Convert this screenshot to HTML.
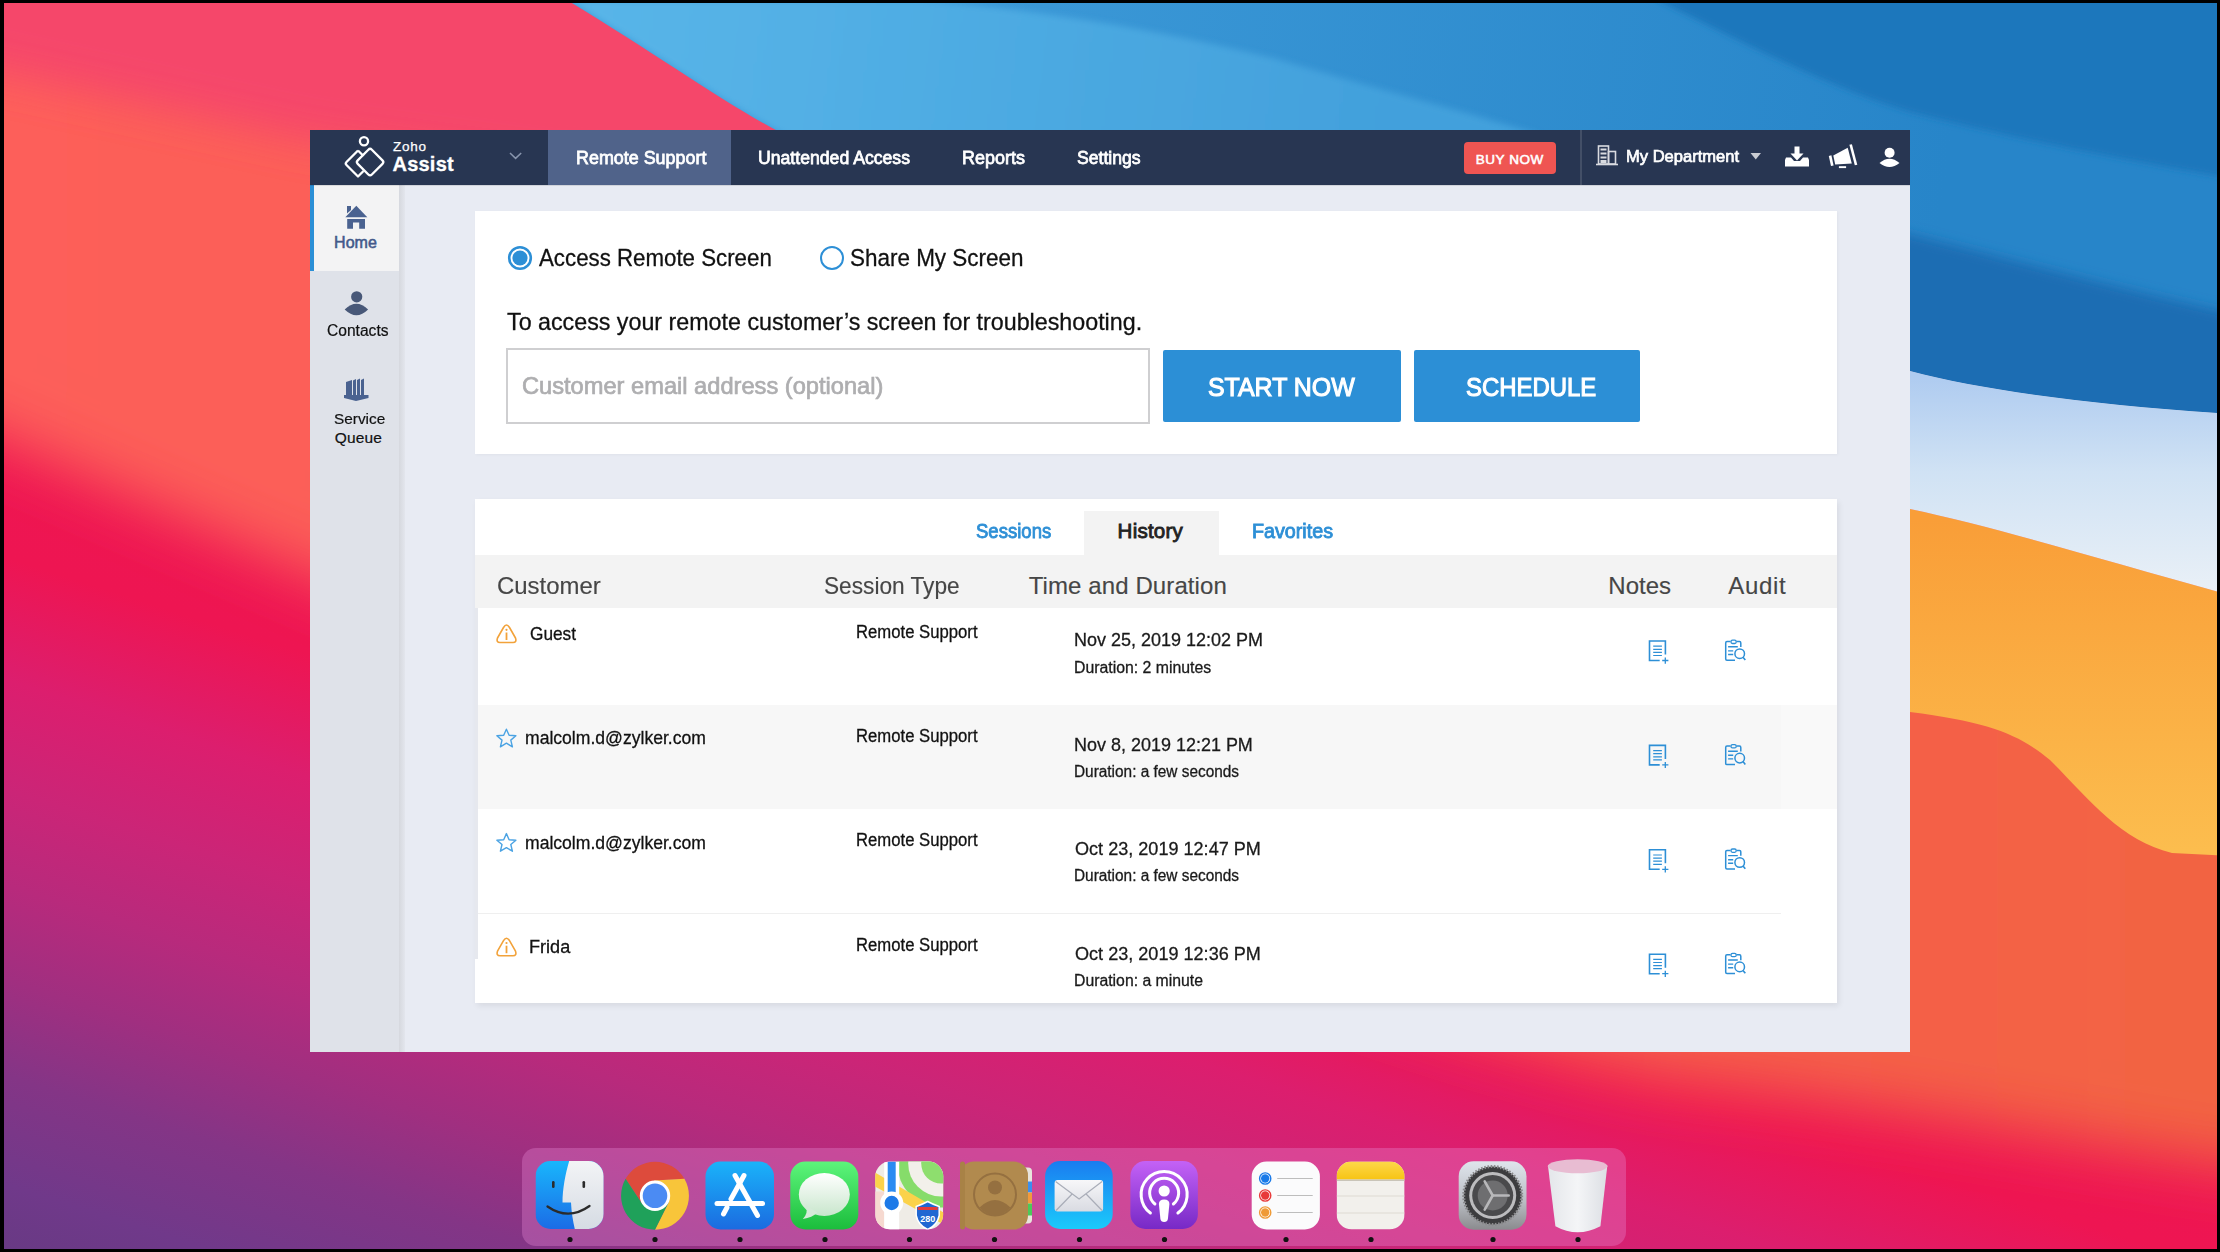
<!DOCTYPE html>
<html><head><meta charset="utf-8">
<style>
*{margin:0;padding:0;box-sizing:border-box}
html,body{width:2220px;height:1252px;overflow:hidden;background:#000;font-family:"Liberation Sans",sans-serif}
#wall{position:absolute;left:4px;top:3px;width:2213px;height:1246px;overflow:hidden}
#wall svg{position:absolute;left:-4px;top:-3px}
.a{position:absolute;white-space:nowrap;line-height:normal}
.b{position:absolute}
#win{position:absolute;left:310px;top:130px;width:1600px;height:922px;background:#e8ebf3;overflow:hidden}
#nav{position:absolute;left:0;top:0;width:1600px;height:55px;background:#283652}
#dock{position:absolute;left:522px;top:1148px;width:1104px;height:98px;border-radius:14px;background:rgba(235,140,215,0.33)}
svg.ic{position:absolute;left:0;top:0;overflow:visible}
</style></head>
<body>
<div id="wall">
<svg width="2220" height="1252" viewBox="0 0 2220 1252">
<defs>
<linearGradient id="gBlue" gradientUnits="userSpaceOnUse" x1="900" y1="0" x2="1950" y2="150">
<stop offset="0" stop-color="#3d9ad8"/>
<stop offset="1" stop-color="#2785c9"/>
</linearGradient>
<linearGradient id="gBlueA" gradientUnits="userSpaceOnUse" x1="600" y1="0" x2="1400" y2="100">
<stop offset="0" stop-color="#58b5e8"/>
<stop offset="1" stop-color="#42a0dc"/>
</linearGradient>
<clipPath id="clipBlue"><path d="M567 0 C650 50 720 100 776 130 L1000 250 L1300 360 C1600 370 1800 360 1910 371 C1990 392 2100 405 2230 414 L2230 0 Z"/></clipPath>
<filter id="blur3" x="-5%" y="-5%" width="110%" height="110%"><feGaussianBlur stdDeviation="3"/></filter>
<filter id="blur6" x="-10%" y="-10%" width="120%" height="120%"><feGaussianBlur stdDeviation="6"/></filter>
<linearGradient id="gLight" gradientUnits="userSpaceOnUse" x1="0" y1="375" x2="0" y2="590">
<stop offset="0" stop-color="#aecbf0"/>
<stop offset="0.45" stop-color="#d0e2f4"/>
<stop offset="1" stop-color="#e9f0f7"/>
</linearGradient>
<linearGradient id="gOrange" gradientUnits="userSpaceOnUse" x1="0" y1="520" x2="0" y2="850">
<stop offset="0" stop-color="#f99e38"/>
<stop offset="1" stop-color="#fcbd4e"/>
</linearGradient>
<linearGradient id="gLow" gradientUnits="userSpaceOnUse" x1="783" y1="179" x2="386" y2="1416">
<stop offset="0" stop-color="#f01a50"/>
<stop offset="0.46" stop-color="#ee1552"/>
<stop offset="0.55" stop-color="#dc1e6e"/>
<stop offset="0.63" stop-color="#cb2577"/>
<stop offset="0.7" stop-color="#b82a7c"/>
<stop offset="0.77" stop-color="#a02f80"/>
<stop offset="0.84" stop-color="#843586"/>
<stop offset="0.92" stop-color="#70398a"/>
<stop offset="1" stop-color="#633a80"/>
</linearGradient>
<linearGradient id="gUp" gradientUnits="userSpaceOnUse" x1="0" y1="0" x2="2220" y2="0">
<stop offset="0" stop-color="#fd5f5a"/>
<stop offset="0.6" stop-color="#f85a50"/>
<stop offset="1" stop-color="#f26442"/>
</linearGradient>
<filter id="blur20" x="-20%" y="-20%" width="140%" height="140%"><feGaussianBlur stdDeviation="20"/></filter>
<filter id="blur30" x="-20%" y="-20%" width="140%" height="140%"><feGaussianBlur stdDeviation="30"/></filter>
</defs>
<rect width="2220" height="1252" fill="url(#gLow)"/>
<path d="M-100 -100 H2300 V1175 C2100 1150 1950 1115 1700 1085 C1450 1060 700 750 -100 395 Z" fill="url(#gUp)" filter="url(#blur30)"/>
<path d="M-100 -100 L900 -100 L900 220 L310 140 L-100 50 Z" fill="#f5476a" filter="url(#blur20)"/>
<path d="M1300 540 C1600 560 1800 500 1910 509 C2000 528 2120 565 2230 595 L2230 856 L2172 853 C2120 840 2090 800 2050 760 C2020 735 1990 722 1910 712 C1800 700 1600 720 1300 760 Z" fill="url(#gOrange)"/>
<path d="M1300 360 C1600 370 1800 360 1910 371 C1990 392 2100 405 2230 414 L2230 595 C2120 565 2000 528 1910 509 C1800 500 1600 560 1300 540 Z" fill="url(#gLight)"/>
<path d="M567 0 C650 50 720 100 776 130 L1000 250 L1300 360 C1600 370 1800 360 1910 371 C1990 392 2100 405 2230 414 L2230 0 Z" fill="url(#gBlue)"/>
<g clip-path="url(#clipBlue)">
<path d="M567 0 L919 0 C1040 10 1160 30 1280 60 C1380 90 1460 110 1540 135 L1000 250 L776 130 C720 100 650 50 567 0 Z" fill="url(#gBlueA)" filter="url(#blur3)"/>
<path d="M1637 -10 C1720 30 1820 85 1910 112 C2000 135 2110 158 2240 180 L2240 -10 Z" fill="#1d77bc" filter="url(#blur3)"/>
<path d="M1850 220 C2000 255 2100 285 2240 315 L2240 450 C2100 440 1990 420 1850 400 Z" fill="#1b6db3" filter="url(#blur6)"/>
</g>
<path d="M1300 360 C1600 370 1800 360 1910 371 C1990 392 2100 405 2230 414 L2230 440 L1300 440 Z" fill="url(#gLight)"/>
</svg>
</div>

<div id="win">
  <div id="nav">
    <div class="b" style="left:238px;top:0;width:183px;height:55px;background:#50638a"></div>
    <div class="b" style="left:1154px;top:12px;width:92px;height:32px;border-radius:4px;background:#ef5552"></div>
    <div class="b" style="left:1269.5px;top:0;width:2px;height:55px;background:#434f67"></div>
  </div>
  <div class="b" style="left:0;top:55px;width:89px;height:867px;background:#dfe2e9"></div>
  <div class="b" style="left:89px;top:55px;width:6px;height:867px;background:linear-gradient(90deg,#d6d8de,#e3e6ed)"></div>
  <div class="b" style="left:0;top:55px;width:89px;height:86px;background:#f3f3f4;border-left:4px solid #2b8fd6"></div>
  <div class="b" style="left:0;top:55px;width:1600px;height:1px;background:rgba(0,0,0,0.10)"></div>

  <div class="b" style="left:164.5px;top:81px;width:1362.5px;height:243px;background:#fff;box-shadow:1px 1px 3px rgba(0,0,0,0.04)"></div>
  <div class="b" style="left:196px;top:218px;width:644px;height:76px;border:2px solid #cfcfd1;background:#fff"></div>
  <div class="b" style="left:852.6px;top:220px;width:238px;height:72px;border-radius:2px;background:#2c8fd6"></div>
  <div class="b" style="left:1103.6px;top:220px;width:226px;height:72px;border-radius:2px;background:#2c8fd6"></div>

  <div class="b" style="left:164.5px;top:369px;width:1362.5px;height:504px;background:#fff;box-shadow:2px 3px 6px rgba(0,0,0,0.07)"></div>
  <div class="b" style="left:774.4px;top:380.5px;width:134.6px;height:45px;background:#f3f3f3"></div>
  <div class="b" style="left:164.5px;top:425px;width:1362.5px;height:53px;background:#f3f3f3"></div>
  <div class="b" style="left:164.5px;top:478px;width:3px;height:351px;background:#e6e8ee"></div>
  <div class="b" style="left:167.5px;top:574.5px;width:1303px;height:104.5px;background:#f7f7f7"></div>
  <div class="b" style="left:1470.5px;top:574.5px;width:56.5px;height:104.5px;background:#f9f9f9"></div>
  <div class="b" style="left:167.5px;top:783px;width:1303px;height:1px;background:#efefef"></div>
</div>

<svg class="ic" width="2220" height="1252" viewBox="0 0 2220 1252">
  <!-- logo -->
  <g fill="none" stroke="#fff" stroke-width="2.3" stroke-linejoin="round">
    <circle cx="364" cy="141.3" r="4.1"/>
    <path d="M358 150.5 L346.5 162 Q345 163.5 346.5 165 L358 176.5 L363.5 171"/>
    <path d="M358 150.5 L363.5 156"/>
    <rect x="360.1" y="152.1" width="20" height="20" rx="2.5" transform="rotate(45 370.1 162.1)"/>
  </g>
  <path d="M510 153 L515.6 158.4 L521.2 153" fill="none" stroke="#8895ad" stroke-width="1.5"/>
  <!-- building icon -->
  <g fill="none" stroke="#d9dbe0" stroke-width="1.6">
    <rect x="1598.5" y="146" width="10" height="18"/>
    <rect x="1608.5" y="151.5" width="7" height="12.5"/>
    <path d="M1596 164.5 H1618"/>
  </g>
  <g fill="#d9dbe0"><rect x="1600.5" y="148.5" width="6" height="2"/><rect x="1600.5" y="152.5" width="6" height="2"/><rect x="1600.5" y="156.5" width="6" height="2"/><rect x="1600.5" y="160" width="6" height="3"/></g>
  <path d="M1750.5 153 L1761 153 L1755.75 159.6 Z" fill="#c9ccd3"/>
  <!-- download -->
  <g fill="#fff">
    <rect x="1794.5" y="146.5" width="5" height="8"/>
    <path d="M1790.5 153.5 L1803.5 153.5 L1797 160.5 Z"/>
    <path d="M1786 157.5 L1791 157.5 L1794 161 L1800 161 L1803 157.5 L1808 157.5 L1809 160 L1809 166.5 L1785 166.5 L1785 160 Z"/>
  </g>
  <!-- megaphone -->
  <g fill="#fff">
    <path d="M1833.3 155.6 L1847.7 147.8 L1851.8 163.6 L1835.2 164.6 Z"/>
    <path d="M1828.8 155.9 L1831.4 155.2 L1833.6 165.6 L1831 166 Z"/>
    <path d="M1849.4 144.8 L1851.9 144.3 L1857.3 164.7 L1854.8 165.2 Z"/>
    <rect x="1838.9" y="166.2" width="7.2" height="1.9"/>
  </g>
  <!-- user -->
  <g fill="#fff">
    <circle cx="1889.6" cy="152.8" r="5"/>
    <path d="M1879.5 163 Q1889.5 154.5 1899.5 163 Q1889.5 171 1879.5 163 Z"/>
  </g>
  <!-- sidebar icons -->
  <g fill="#4a6290">
    <path d="M356.3 205.8 L367.3 217.3 L345.3 217.3 Z"/>
    <path d="M347 206 L351 206 L351 210 L347 213.5 Z"/>
    <path d="M347.2 219 H365 V228.8 H359.2 V222.4 H353 V228.8 H347.2 Z"/>
  </g>
  <g fill="#485878">
    <circle cx="356.7" cy="296.8" r="5.6"/>
    <path d="M344.7 309.5 Q356.4 298 368.1 309.5 Q356.4 321 344.7 309.5 Z"/>
  </g>
  <g fill="#4a6290">
    <path d="M346 382 L352 380 L352 396 L346 396 Z"/>
    <path d="M353 380.5 L356 379 L356 396 L353 396 Z"/>
    <path d="M357 380 L360 378.5 L360 396 L357 396 Z"/>
    <path d="M361 380 L364 378.5 L364 396 L361 396 Z"/>
    <path d="M344 395 L368.5 395 L368.5 398 L356 401 L344 398 Z"/>
  </g>
  <!-- radios -->
  <circle cx="520" cy="258" r="10.8" fill="#fff" stroke="#2d8fd6" stroke-width="2.6"/>
  <circle cx="520" cy="258" r="7.6" fill="#2d8fd6"/>
  <circle cx="832" cy="258" r="11" fill="#fff" stroke="#2d8fd6" stroke-width="2"/>
  <!-- row icons -->
  <g id="warn" fill="none" stroke="#f2a23a" stroke-width="1.6" stroke-linejoin="round">
    <path d="M506.5 625 Q505 625 503.5 627.5 L497.5 638 Q496 642.5 500 642.5 L513 642.5 Q517 642.5 515.5 638 L509.5 627.5 Q508 625 506.5 625 Z"/>
    <path d="M506.5 632.5 V640" stroke-width="1.8"/>
  </g>
  <circle cx="506.5" cy="629.8" r="1.1" fill="#f2a23a"/>
  <g transform="translate(0 313.2)">
    <path d="M506.5 625 Q505 625 503.5 627.5 L497.5 638 Q496 642.5 500 642.5 L513 642.5 Q517 642.5 515.5 638 L509.5 627.5 Q508 625 506.5 625 Z" fill="none" stroke="#f2a23a" stroke-width="1.6" stroke-linejoin="round"/>
    <path d="M506.5 632.5 V640" stroke="#f2a23a" stroke-width="1.8"/>
    <circle cx="506.5" cy="629.8" r="1.1" fill="#f2a23a"/>
  </g>
  <path id="star" d="M506.4 729.2 L509.1 735.3 L515.9 735.8 L510.8 740.1 L512.4 746.8 L506.4 743.2 L500.4 746.8 L502 740.1 L496.9 735.8 L503.7 735.3 Z" fill="none" stroke="#4ba3e3" stroke-width="1.4" stroke-linejoin="round"/>
  <path d="M506.4 833.6 L509.1 839.7 L515.9 840.2 L510.8 844.5 L512.4 851.2 L506.4 847.6 L500.4 851.2 L502 844.5 L496.9 840.2 L503.7 839.7 Z" fill="none" stroke="#4ba3e3" stroke-width="1.4" stroke-linejoin="round"/>
  <!-- notes & audit icons x4 -->
  <g id="na" fill="none" stroke="#2d8fd6">
    <path d="M1659.7 660.5 H1649.5 V641 H1665.4 V654.5" stroke-width="1.6"/>
    <path d="M1653.2 646.2 H1661.9 M1653.2 649.3 H1661.9 M1653.2 652.4 H1661.9 M1653.2 655.5 H1661.9" stroke-width="1.2"/>
    <path d="M1662.2 660.5 H1668.4 M1665.3 657.5 V663.7" stroke-width="1.3"/>
    <path d="M1735 660.2 H1727 Q1725.7 660.2 1725.7 659 V643 Q1725.7 641.6 1727 641.6 H1730.5 M1736.5 641.6 H1739.5 Q1740.8 641.6 1740.8 643 V647" stroke-width="1.5"/>
    <rect x="1731" y="640.2" width="5.2" height="3.3" rx="1.5" stroke-width="1.3"/>
    <path d="M1728.1 646.8 H1737.8 M1728.1 650.9 H1733.2 M1728.1 654.5 H1733.2" stroke-width="1.4"/>
    <circle cx="1739.7" cy="653.7" r="4.8" stroke-width="1.5"/>
    <path d="M1743 657.2 L1745.3 660" stroke-width="1.6"/>
  </g>
  <use href="#na" y="104.4"/>
  <use href="#na" y="208.8"/>
  <use href="#na" y="313.2"/>
</svg>

<span class="a" style="left:393.0px;top:138.6px;font-size:13.5px;font-weight:400;color:#fff;letter-spacing:0.746px;-webkit-text-stroke:0.25px #fff;">Zoho</span>
<span class="a" style="left:392.5px;top:153.2px;font-size:20px;font-weight:700;color:#fff;letter-spacing:0.226px;-webkit-text-stroke:0.3px currentColor;">Assist</span>
<span class="a" style="left:575.7px;top:147.0px;font-size:18.5px;font-weight:400;color:#fff;letter-spacing:0.000px;-webkit-text-stroke:0.78px currentColor;transform:scaleX(0.9680);transform-origin:0 0;">Remote Support</span>
<span class="a" style="left:757.7px;top:147.0px;font-size:18.5px;font-weight:400;color:#fff;letter-spacing:0.000px;-webkit-text-stroke:0.78px currentColor;transform:scaleX(0.9536);transform-origin:0 0;">Unattended Access</span>
<span class="a" style="left:961.6px;top:147.0px;font-size:18.5px;font-weight:400;color:#fff;letter-spacing:0.000px;-webkit-text-stroke:0.78px currentColor;transform:scaleX(0.9712);transform-origin:0 0;">Reports</span>
<span class="a" style="left:1076.6px;top:147.0px;font-size:18.5px;font-weight:400;color:#fff;letter-spacing:0.000px;-webkit-text-stroke:0.78px currentColor;transform:scaleX(0.9520);transform-origin:0 0;">Settings</span>
<span class="a" style="left:1475.7px;top:151.7px;font-size:13.5px;font-weight:400;color:#fff;letter-spacing:0.557px;-webkit-text-stroke:0.57px currentColor;">BUY NOW</span>
<span class="a" style="left:1625.7px;top:147.0px;font-size:17px;font-weight:400;color:#fff;letter-spacing:0.000px;-webkit-text-stroke:0.71px currentColor;transform:scaleX(0.9725);transform-origin:0 0;">My Department</span>
<span class="a" style="left:334.0px;top:233.9px;font-size:16px;font-weight:400;color:#43598a;letter-spacing:0.073px;-webkit-text-stroke:0.55px #43598a;">Home</span>
<span class="a" style="left:326.8px;top:321.6px;font-size:16px;font-weight:400;color:#111;letter-spacing:0.000px;-webkit-text-stroke:0.2px #111;transform:scaleX(0.9740);transform-origin:0 0;">Contacts</span>
<span class="a" style="left:334.4px;top:409.6px;font-size:15.5px;font-weight:400;color:#111;letter-spacing:0.000px;-webkit-text-stroke:0.2px #111;transform:scaleX(0.9909);transform-origin:0 0;">Service</span>
<span class="a" style="left:334.8px;top:429.3px;font-size:15.5px;font-weight:400;color:#111;letter-spacing:0.146px;-webkit-text-stroke:0.2px #111;">Queue</span>
<span class="a" style="left:538.5px;top:243.8px;font-size:24.5px;font-weight:400;color:#111;letter-spacing:0.000px;-webkit-text-stroke:0.3px currentColor;transform:scaleX(0.9093);transform-origin:0 0;">Access Remote Screen</span>
<span class="a" style="left:850.1px;top:243.8px;font-size:24.5px;font-weight:400;color:#111;letter-spacing:0.000px;-webkit-text-stroke:0.3px currentColor;transform:scaleX(0.9166);transform-origin:0 0;">Share My Screen</span>
<span class="a" style="left:506.5px;top:308.0px;font-size:24px;font-weight:400;color:#111;letter-spacing:0.000px;-webkit-text-stroke:0.3px currentColor;transform:scaleX(0.9690);transform-origin:0 0;">To access your remote customer’s screen for troubleshooting.</span>
<span class="a" style="left:521.9px;top:371.7px;font-size:24px;font-weight:400;color:#aeaeb0;letter-spacing:0.000px;-webkit-text-stroke:0.7px #aeaeb0;transform:scaleX(0.9851);transform-origin:0 0;">Customer email address (optional)</span>
<span class="a" style="left:1207.8px;top:371.9px;font-size:26.5px;font-weight:400;color:#fff;letter-spacing:0.000px;-webkit-text-stroke:1.11px currentColor;transform:scaleX(0.9400);transform-origin:0 0;">START NOW</span>
<span class="a" style="left:1466.1px;top:371.9px;font-size:26.5px;font-weight:400;color:#fff;letter-spacing:0.000px;-webkit-text-stroke:1.11px currentColor;transform:scaleX(0.9023);transform-origin:0 0;">SCHEDULE</span>
<span class="a" style="left:976.3px;top:518.9px;font-size:20.5px;font-weight:400;color:#2d8fd6;letter-spacing:0.000px;-webkit-text-stroke:0.86px currentColor;transform:scaleX(0.9044);transform-origin:0 0;">Sessions</span>
<span class="a" style="left:1117.6px;top:518.9px;font-size:20.5px;font-weight:400;color:#222;letter-spacing:0.228px;-webkit-text-stroke:0.86px currentColor;">History</span>
<span class="a" style="left:1251.5px;top:518.9px;font-size:20.5px;font-weight:400;color:#2d8fd6;letter-spacing:0.000px;-webkit-text-stroke:0.86px currentColor;transform:scaleX(0.9608);transform-origin:0 0;">Favorites</span>
<span class="a" style="left:497.4px;top:572.2px;font-size:24px;font-weight:400;color:#464646;letter-spacing:0.000px;-webkit-text-stroke:0.15px currentColor;transform:scaleX(0.9967);transform-origin:0 0;">Customer</span>
<span class="a" style="left:823.8px;top:572.2px;font-size:24px;font-weight:400;color:#464646;letter-spacing:0.000px;-webkit-text-stroke:0.15px currentColor;transform:scaleX(0.9444);transform-origin:0 0;">Session Type</span>
<span class="a" style="left:1028.7px;top:572.2px;font-size:24px;font-weight:400;color:#464646;letter-spacing:0.101px;-webkit-text-stroke:0.15px currentColor;">Time and Duration</span>
<span class="a" style="left:1608.3px;top:572.2px;font-size:24px;font-weight:400;color:#464646;letter-spacing:0.001px;-webkit-text-stroke:0.15px currentColor;">Notes</span>
<span class="a" style="left:1728.2px;top:572.2px;font-size:24px;font-weight:400;color:#464646;letter-spacing:0.691px;-webkit-text-stroke:0.15px currentColor;">Audit</span>
<span class="a" style="left:530.3px;top:622.8px;font-size:19px;font-weight:400;color:#111;letter-spacing:0.000px;-webkit-text-stroke:0.3px currentColor;transform:scaleX(0.9083);transform-origin:0 0;">Guest</span>
<span class="a" style="left:856.3px;top:621.6px;font-size:17.5px;font-weight:400;color:#111;letter-spacing:0.000px;-webkit-text-stroke:0.3px currentColor;transform:scaleX(0.9536);transform-origin:0 0;">Remote Support</span>
<span class="a" style="left:1074.0px;top:629.3px;font-size:19px;font-weight:400;color:#1a1a1a;letter-spacing:0.000px;-webkit-text-stroke:0.3px currentColor;transform:scaleX(0.9469);transform-origin:0 0;">Nov 25, 2019 12:02 PM</span>
<span class="a" style="left:1073.9px;top:658.5px;font-size:16px;font-weight:400;color:#1a1a1a;letter-spacing:0.000px;-webkit-text-stroke:0.3px currentColor;transform:scaleX(0.9889);transform-origin:0 0;">Duration: 2 minutes</span>
<span class="a" style="left:524.9px;top:727.2px;font-size:19px;font-weight:400;color:#111;letter-spacing:0.000px;-webkit-text-stroke:0.3px currentColor;transform:scaleX(0.9248);transform-origin:0 0;">malcolm.d@zylker.com</span>
<span class="a" style="left:856.3px;top:726.0px;font-size:17.5px;font-weight:400;color:#111;letter-spacing:0.000px;-webkit-text-stroke:0.3px currentColor;transform:scaleX(0.9536);transform-origin:0 0;">Remote Support</span>
<span class="a" style="left:1074.0px;top:733.7px;font-size:19px;font-weight:400;color:#1a1a1a;letter-spacing:0.000px;-webkit-text-stroke:0.3px currentColor;transform:scaleX(0.9459);transform-origin:0 0;">Nov 8, 2019 12:21 PM</span>
<span class="a" style="left:1073.9px;top:762.9px;font-size:16px;font-weight:400;color:#1a1a1a;letter-spacing:0.000px;-webkit-text-stroke:0.3px currentColor;transform:scaleX(0.9616);transform-origin:0 0;">Duration: a few seconds</span>
<span class="a" style="left:524.9px;top:831.6px;font-size:19px;font-weight:400;color:#111;letter-spacing:0.000px;-webkit-text-stroke:0.3px currentColor;transform:scaleX(0.9248);transform-origin:0 0;">malcolm.d@zylker.com</span>
<span class="a" style="left:856.3px;top:830.4px;font-size:17.5px;font-weight:400;color:#111;letter-spacing:0.000px;-webkit-text-stroke:0.3px currentColor;transform:scaleX(0.9536);transform-origin:0 0;">Remote Support</span>
<span class="a" style="left:1074.9px;top:838.1px;font-size:19px;font-weight:400;color:#1a1a1a;letter-spacing:0.000px;-webkit-text-stroke:0.3px currentColor;transform:scaleX(0.9513);transform-origin:0 0;">Oct 23, 2019 12:47 PM</span>
<span class="a" style="left:1073.9px;top:867.3px;font-size:16px;font-weight:400;color:#1a1a1a;letter-spacing:0.000px;-webkit-text-stroke:0.3px currentColor;transform:scaleX(0.9616);transform-origin:0 0;">Duration: a few seconds</span>
<span class="a" style="left:529.3px;top:936.0px;font-size:19px;font-weight:400;color:#111;letter-spacing:0.000px;-webkit-text-stroke:0.3px currentColor;transform:scaleX(0.9527);transform-origin:0 0;">Frida</span>
<span class="a" style="left:856.3px;top:934.8px;font-size:17.5px;font-weight:400;color:#111;letter-spacing:0.000px;-webkit-text-stroke:0.3px currentColor;transform:scaleX(0.9536);transform-origin:0 0;">Remote Support</span>
<span class="a" style="left:1074.9px;top:942.5px;font-size:19px;font-weight:400;color:#1a1a1a;letter-spacing:0.000px;-webkit-text-stroke:0.3px currentColor;transform:scaleX(0.9513);transform-origin:0 0;">Oct 23, 2019 12:36 PM</span>
<span class="a" style="left:1073.9px;top:971.7px;font-size:16px;font-weight:400;color:#1a1a1a;letter-spacing:0.000px;-webkit-text-stroke:0.3px currentColor;transform:scaleX(0.9866);transform-origin:0 0;">Duration: a minute</span>

<div id="dock"></div>
<svg class="ic" width="2220" height="1252" viewBox="0 0 2220 1252">
<defs>
  <linearGradient id="dFinderL" x1="0" y1="0" x2="0" y2="1"><stop offset="0" stop-color="#19b6fc"/><stop offset="1" stop-color="#1b6ce6"/></linearGradient>
  <linearGradient id="dFinderR" x1="0" y1="0" x2="0" y2="1"><stop offset="0" stop-color="#f3f4f6"/><stop offset="1" stop-color="#d5dbe3"/></linearGradient>
  <linearGradient id="dApp" x1="0" y1="0" x2="0" y2="1"><stop offset="0" stop-color="#1ab3fa"/><stop offset="1" stop-color="#1b6be0"/></linearGradient>
  <linearGradient id="dMsg" x1="0" y1="0" x2="0" y2="1"><stop offset="0" stop-color="#5df57b"/><stop offset="1" stop-color="#1bbd3c"/></linearGradient>
  <linearGradient id="dBubble" x1="0" y1="0" x2="0" y2="1"><stop offset="0" stop-color="#ffffff"/><stop offset="1" stop-color="#c8e6cc"/></linearGradient>
  <linearGradient id="dMail" x1="0" y1="0" x2="0" y2="1"><stop offset="0" stop-color="#1a7cf0"/><stop offset="1" stop-color="#1bcafb"/></linearGradient>
  <linearGradient id="dEnv" x1="0" y1="0" x2="0" y2="1"><stop offset="0" stop-color="#f7f7f9"/><stop offset="1" stop-color="#d9dbe2"/></linearGradient>
  <linearGradient id="dPod" x1="0" y1="0" x2="0" y2="1"><stop offset="0" stop-color="#c462f6"/><stop offset="1" stop-color="#7729c6"/></linearGradient>
  <linearGradient id="dSys" x1="0" y1="0" x2="0" y2="1"><stop offset="0" stop-color="#dfe5ec"/><stop offset="0.6" stop-color="#b9bcc2"/><stop offset="1" stop-color="#8a8b8e"/></linearGradient>
  <linearGradient id="dNotes" x1="0" y1="0" x2="0" y2="1"><stop offset="0" stop-color="#fdd84a"/><stop offset="1" stop-color="#f7c414"/></linearGradient>
  <linearGradient id="dTrash" x1="0" y1="0" x2="1" y2="0"><stop offset="0" stop-color="#e4e6ea"/><stop offset="0.5" stop-color="#f4f5f7"/><stop offset="1" stop-color="#dcdfe4"/></linearGradient>
  <clipPath id="dClip"><rect x="0" y="0" width="68" height="68" rx="15"/></clipPath>
</defs>
<!-- Finder -->
<g transform="translate(535.5 1161)">
  <g clip-path="url(#dClip)">
    <rect width="68" height="68" fill="url(#dFinderL)"/>
    <path d="M34 -1 L69 -1 L69 69 L39.5 69 C37.5 60 36 52 35.5 41.5 L27 41.5 C27 28 30 12 34 -1 Z" fill="url(#dFinderR)"/>
  </g>
  <rect x="16.5" y="20" width="2.6" height="7" rx="1.3" fill="#2b2b2b"/>
  <rect x="47" y="20" width="2.6" height="7" rx="1.3" fill="#2b2b2b"/>
  <path d="M12 45.5 Q33 60 54 45" fill="none" stroke="#2b2b2b" stroke-width="2.3" stroke-linecap="round"/>
</g>
<!-- Chrome -->
<g transform="translate(655 1195.7)">
  <path d="M-29.4 -17.0 A34 34 0 0 1 29.4 -17.0 L-0.9 -15.2 L0 0 L-12.7 8.4 Z" fill="#dd4b3c"/>
  <path d="M29.4 -17.0 A34 34 0 0 1 0.0 34.0 L13.6 6.8 L0 0 L-0.9 -15.2 Z" fill="#f8c53a"/>
  <path d="M0.0 34.0 A34 34 0 0 1 -29.4 -17.0 L-12.7 8.4 L0 0 L13.6 6.8 Z" fill="#1fa15a"/>
  <circle r="15.2" fill="#fff"/>
  <circle r="12.3" fill="#4b8bf3"/>
</g>
<!-- App Store -->
<g transform="translate(705.5 1161.5)">
  <rect width="68.5" height="68" rx="15" fill="url(#dApp)"/>
  <g stroke="#fff" stroke-width="5" stroke-linecap="round" fill="none">
    <path d="M29.5 14 L52 54"/>
    <path d="M38.5 14 L25.5 37.5 M21.5 46 L18 52.5"/>
    <path d="M11.5 42 L57 42"/>
  </g>
</g>
<!-- Messages -->
<g transform="translate(790.3 1161.5)">
  <rect width="68" height="68" rx="15" fill="url(#dMsg)"/>
  <ellipse cx="34" cy="33" rx="25.5" ry="21.5" fill="url(#dBubble)"/>
  <path d="M16 44 Q18 52 12.5 57.5 Q22 56 27 51 Z" fill="#d5ead8"/>
</g>
<!-- Maps -->
<g transform="translate(875.2 1161.5)">
  <g clip-path="url(#dClip)">
    <rect width="68" height="68" fill="#efece6"/>
    <circle cx="66" cy="2" r="44" fill="#86dc6a"/>
    <circle cx="66" cy="2" r="33" fill="#f2f0ea"/>
    <circle cx="66" cy="2" r="20" fill="#8ede6e"/>
    <rect x="0" y="30" width="9" height="40" fill="#f6d9d0"/>
    <path d="M-2 10 L70 52 L70 64 L-2 24 Z" fill="#fbd24a"/>
    <rect x="9" y="0" width="15" height="68" fill="#ffffff"/>
    <rect x="12.5" y="0" width="8" height="32" rx="1" fill="#2a8bf2"/>
    <circle cx="16.5" cy="41.5" r="11.5" fill="#fff"/>
    <circle cx="16.5" cy="41.5" r="7.2" fill="#1d7ae8"/>
    <path d="M41 45 Q47 43 52.5 40 Q58 43 64 45 L64 54 Q62 64 52.5 68 Q43 64 41 54 Z" fill="#2067d2" stroke="#fff" stroke-width="1.5"/>
    <rect x="42.5" y="45.5" width="20" height="3" fill="#e33b3b"/>
    <text x="52.5" y="60" font-size="9" font-weight="700" fill="#fff" text-anchor="middle" font-family="Liberation Sans">280</text>
  </g>
</g>
<!-- Contacts -->
<g transform="translate(960 1161.5)">
  <rect x="60" y="6" width="12" height="56" rx="4" fill="#e8e4dc"/>
  <rect x="66" y="20" width="6" height="11" fill="#3b8ff0"/>
  <rect x="66" y="31" width="6" height="11" fill="#f39a3a"/>
  <rect x="66" y="42" width="6" height="12" fill="#4cc95a"/>
  <rect width="68" height="68" rx="14" fill="#b18a4e"/>
  <rect width="5" height="68" rx="2.5" fill="#a88246"/>
  <circle cx="35" cy="33" r="21" fill="none" stroke="#957040" stroke-width="2"/>
  <circle cx="35" cy="26" r="7" fill="#957040"/>
  <path d="M19.5 46 Q35 31 50.5 46 Q43 54 35 54 Q27 54 19.5 46 Z" fill="#957040"/>
</g>
<!-- Mail -->
<g transform="translate(1045.1 1161)">
  <rect width="67.6" height="68" rx="15" fill="url(#dMail)"/>
  <rect x="9.5" y="19" width="48.5" height="31.5" rx="3" fill="url(#dEnv)"/>
  <path d="M10.5 20.5 L34 38 L57 20.5 M11 49.5 L27 33 M57 49.5 L41 33" fill="none" stroke="#a9adb8" stroke-width="1.2"/>
</g>
<!-- Podcasts -->
<g transform="translate(1130.4 1161)">
  <rect width="67.5" height="68" rx="15" fill="url(#dPod)"/>
  <g fill="none" stroke="#fff" stroke-width="3" stroke-linecap="round">
    <path d="M20 52 A23 23 0 1 1 47.5 52"/>
    <path d="M24.5 43 A14.5 14.5 0 1 1 43 43"/>
  </g>
  <circle cx="33.75" cy="30" r="5.6" fill="#fff"/>
  <path d="M28.5 43 Q28.5 38.5 33.75 38.5 Q39 38.5 39 43 L37.5 58 Q37 61 33.75 61 Q30.5 61 30 58 Z" fill="#fff"/>
</g>
<!-- Reminders -->
<g transform="translate(1251.7 1161.5)">
  <rect width="68.2" height="68" rx="15" fill="#fbfbfc"/>
  <circle cx="13.5" cy="17" r="5.6" fill="#fff" stroke="#1a7ae8" stroke-width="1.4"/><circle cx="13.5" cy="17" r="4.2" fill="#1a7ae8"/>
  <circle cx="13.5" cy="34" r="5.6" fill="#fff" stroke="#e83a3a" stroke-width="1.4"/><circle cx="13.5" cy="34" r="4.2" fill="#e83a3a"/>
  <circle cx="13.5" cy="51" r="5.6" fill="#fff" stroke="#ef9a36" stroke-width="1.4"/><circle cx="13.5" cy="51" r="4.2" fill="#ef9a36"/>
  <path d="M25.5 17 H61 M25.5 34 H61 M25.5 51 H61" stroke="#bdbdbd" stroke-width="1.2"/>
</g>
<!-- Notes -->
<g transform="translate(1336.6 1161.5)">
  <g clip-path="url(#dClip)">
    <rect width="68" height="68" fill="#f2f0ec"/>
    <rect width="68" height="18" fill="url(#dNotes)"/>
    <rect y="18" width="68" height="1.5" fill="#c9c4b8"/>
    <path d="M0 34.5 H68 M0 51.5 H68" stroke="#dedad2" stroke-width="1"/>
  </g>
</g>
<!-- System Preferences -->
<g transform="translate(1458.7 1161.3)">
  <rect width="67.8" height="68.4" rx="15" fill="url(#dSys)"/>
  <circle cx="34" cy="34.2" r="29" fill="#3c3c3e"/>
  <circle cx="34" cy="34.2" r="29" fill="none" stroke="#8a8a8c" stroke-width="3" stroke-dasharray="1.6 1.6"/>
  <circle cx="34" cy="34.2" r="23.5" fill="#bcbcbe"/>
  <circle cx="34" cy="34.2" r="20.5" fill="#4a4a4c"/>
  <circle cx="34" cy="34.2" r="15" fill="#6e6e70"/>
  <g stroke="#b8b8ba" stroke-width="2.6" stroke-linecap="round">
    <path d="M34 34.2 L26 20"/><path d="M34 34.2 L50 34.2"/><path d="M34 34.2 L26 48.4"/>
  </g>
</g>
<!-- Trash -->
<g transform="translate(1547.4 1158.3)">
  <path d="M0.5 7 Q30 -2 60 7 L53 68 Q30 80 8 68 Z" fill="url(#dTrash)"/>
  <ellipse cx="30.2" cy="8" rx="29.7" ry="7" fill="#e8bcd2"/>
</g>
<!-- dots -->
<g fill="#111">
  <circle cx="570" cy="1239.5" r="2.6"/><circle cx="655" cy="1239.5" r="2.6"/><circle cx="740" cy="1239.5" r="2.6"/>
  <circle cx="825" cy="1239.5" r="2.6"/><circle cx="909.5" cy="1239.5" r="2.6"/><circle cx="994.5" cy="1239.5" r="2.6"/>
  <circle cx="1079.5" cy="1239.5" r="2.6"/><circle cx="1164.5" cy="1239.5" r="2.6"/><circle cx="1286" cy="1239.5" r="2.6"/>
  <circle cx="1371" cy="1239.5" r="2.6"/><circle cx="1493" cy="1239.5" r="2.6"/><circle cx="1578" cy="1239.5" r="2.6"/>
</g>
</svg>

</body></html>
